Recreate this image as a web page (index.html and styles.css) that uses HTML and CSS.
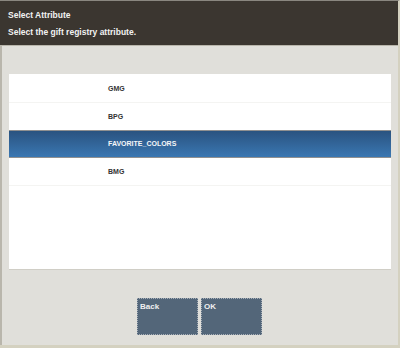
FILE: index.html
```html
<!DOCTYPE html>
<html>
<head>
<meta charset="utf-8">
<link rel="stylesheet" href="styles.css">
</head>
<body>
<div class="frame">
  <div class="header">
    <div class="title">Select Attribute</div>
    <div class="subtitle">Select the gift registry attribute.</div>
  </div>
  <div class="content">
    <div class="list">
      <div class="row">GMG</div>
      <div class="row">BPG</div>
      <div class="row selected">FAVORITE_COLORS</div>
      <div class="row">BMG</div>
    </div>
    <div class="buttons">
      <div class="btn">Back</div>
      <div class="btn">OK</div>
    </div>
  </div>
</div>
</body>
</html>
```

FILE: styles.css
```css
html, body {
  margin: 0;
  padding: 0;
  width: 400px;
  height: 348px;
  overflow: hidden;
  background: #e0dfda;
  font-family: "Liberation Sans", Arial, sans-serif;
}
.frame {
  width: 400px;
  height: 348px;
  box-sizing: border-box;
  border-top: 1px solid #8a8780;
  border-right: 2px solid #d4d1c0;
  border-bottom: 3px solid #d4d1c0;
  display: flex;
  flex-direction: column;
}
.header {
  height: 45px;
  background: #3b3630;
  border-bottom: 1px solid #b9b6ab;
  padding: 8px 0 0 8px;
  box-sizing: border-box;
  color: #f2f2f2;
  font-weight: bold;
  font-size: 8.5px;
}
.title {
  height: 17px;
  line-height: 12px;
}
.subtitle {
  line-height: 12px;
}
.content {
  flex: 1;
  border-left: 2px solid #b9b6ac;
  padding: 28px 7px 0 7px;
  display: flex;
  flex-direction: column;
}
.list {
  height: 196px;
  background: #fff;
  border-bottom: 1px solid #d0cec6;
  box-sizing: border-box;
  padding-top: 1px;
}
.row {
  height: 27px;
  line-height: 27px;
  padding-left: 99px;
  font-size: 7px;
  font-weight: bold;
  color: #333;
  border-bottom: 1px solid #f4f4f2;
}
.row.selected {
  height: 26px;
  line-height: 26px;
  color: #f4f6f8;
  background: linear-gradient(#2a5380, #3a77b2);
  border-top: 1px solid #909090;
  border-bottom: 1px solid #909090;
  margin-top: -1px;
}
.buttons {
  display: flex;
  gap: 3px;
  padding: 28px 0 0 128px;
}
.btn {
  width: 61px;
  height: 37px;
  box-sizing: border-box;
  background: #536679;
  border: 1px dotted #a9b0b8;
  color: #f0f0f0;
  font-size: 8px;
  font-weight: bold;
  padding: 3px 0 0 2px;
}
```
